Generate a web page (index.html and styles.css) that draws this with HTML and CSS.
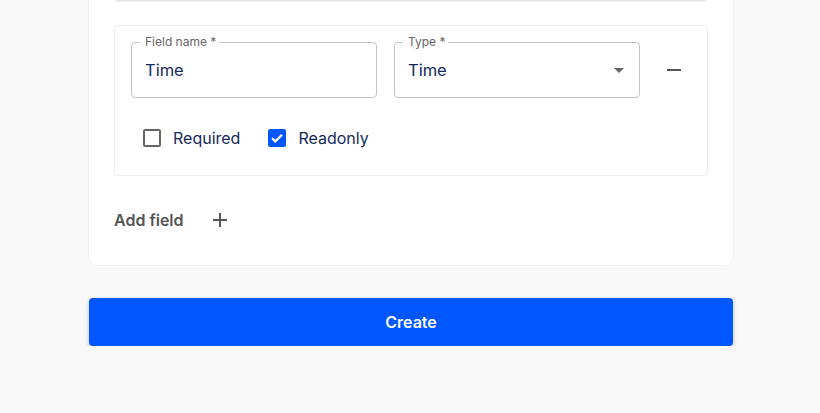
FILE: index.html
```html
<!DOCTYPE html>
<html lang="en">
<head>
    <meta charset="UTF-8">
    <meta name="viewport" content="width=device-width, initial-scale=1.0">
    <title>Create collection</title>
    <link rel="stylesheet" href="styles.css">
</head>
<body>
    <div class="page">
        <div class="card">
            <div class="field-card prev"></div>

            <div class="field-card">
                <div class="field-row">
                    <div class="outlined">
                        <fieldset><legend>Field name *</legend></fieldset>
                        <label>Field name *</label>
                        <div class="value">Time</div>
                    </div>
                    <div class="outlined select">
                        <fieldset><legend>Type *</legend></fieldset>
                        <label>Type *</label>
                        <div class="value">Time</div>
                        <svg class="arrow" width="24" height="24" viewBox="0 0 24 24"><path d="M7 10l5 5 5-5z" fill="#666"/></svg>
                    </div>
                    <button class="icon-btn" aria-label="Remove field">
                        <svg width="24" height="24" viewBox="0 0 24 24"><path d="M19 13H5v-2h14v2z" fill="#555"/></svg>
                    </button>
                </div>
                <div class="check-row">
                    <label class="check">
                        <span class="box"></span>
                        <span>Required</span>
                    </label>
                    <label class="check">
                        <span class="box checked">
                            <svg width="18" height="18" viewBox="0 0 18 18"><path d="M4 9.2l3.3 3.2L14 5.8" fill="none" stroke="#fff" stroke-width="2.2"/></svg>
                        </span>
                        <span>Readonly</span>
                    </label>
                </div>
            </div>

            <div class="add-row">
                <span>Add field</span>
                <button class="icon-btn" aria-label="Add field">
                    <svg width="24" height="24" viewBox="0 0 24 24"><path d="M19 13h-6v6h-2v-6H5v-2h6V5h2v6h6v2z" fill="#555"/></svg>
                </button>
            </div>
        </div>

        <button class="btn-create">Create</button>
    </div>
</body>
</html>
```

FILE: styles.css
```css
body {
    margin: 0;
    padding-left: 2px;
    background-color: #f8f8f8;
    font-family: 'Inter', 'Roboto', sans-serif;
    color: #14295a;
}
.page {
    width: 644px;
    margin: -11px auto 0;
}
.card {
    background-color: #fff;
    border-radius: 0 0 8px 8px;
    box-shadow: 0 0 0 1px #f0f0f0;
    padding: 0 25px 25px;
}
.field-card {
    border: 1px solid #ececec;
    border-radius: 4px;
    padding: 16px 16px 28px;
    margin-bottom: 24px;
}
.field-card.prev {
    height: 10px;
    padding: 0;
    border-color: #e2e2e2;
    box-shadow: 0 1px 1px rgba(0, 0, 0, 0.06);
}
.field-row {
    display: flex;
    align-items: center;
    gap: 17px;
}
.outlined {
    position: relative;
    flex-shrink: 0;
    width: 246px;
    height: 56px;
    box-sizing: border-box;
    padding: 0 14px;
    display: flex;
    align-items: center;
}
.outlined fieldset {
    position: absolute;
    inset: -5px 0 0;
    margin: 0;
    padding: 0 8px;
    border: 1px solid #c4c4c4;
    border-radius: 4px;
    pointer-events: none;
}
.outlined legend {
    font-size: 12px;
    padding: 0 4px;
    visibility: hidden;
    line-height: 11px;
}
.outlined label {
    position: absolute;
    top: -8px;
    left: 14px;
    font-size: 12px;
    color: #666;
    line-height: 16px;
}
.outlined .value {
    font-size: 16.5px;
    color: #14295a;
}
.select .arrow {
    position: absolute;
    right: 9px;
    top: 16px;
}
.icon-btn {
    border: none;
    background: none;
    padding: 8px;
    display: flex;
    cursor: pointer;
}
.field-row .icon-btn {
    margin-left: -3px;
}
.check-row {
    display: flex;
    gap: 28px;
    margin-top: 31px;
    padding-left: 12px;
}
.check {
    display: flex;
    align-items: center;
    gap: 12px;
    font-size: 16px;
    height: 18px;
}
.box {
    width: 18px;
    height: 18px;
    box-sizing: border-box;
    border: 2px solid #666;
    border-radius: 2px;
    display: flex;
}
.box.checked {
    border: none;
    background-color: #0057ff;
}
.add-row {
    display: flex;
    align-items: center;
    gap: 16px;
    font-size: 16px;
    font-weight: 600;
    color: #555;
    height: 40px;
}
.btn-create {
    display: block;
    width: 100%;
    height: 48px;
    margin-top: 33px;
    border: none;
    border-radius: 4px;
    background-color: #0057ff;
    color: #fff;
    font-family: 'Inter', sans-serif;
    font-size: 16px;
    font-weight: 600;
    box-shadow: 0 2px 4px rgba(0, 0, 0, 0.25);
    cursor: pointer;
}
```
